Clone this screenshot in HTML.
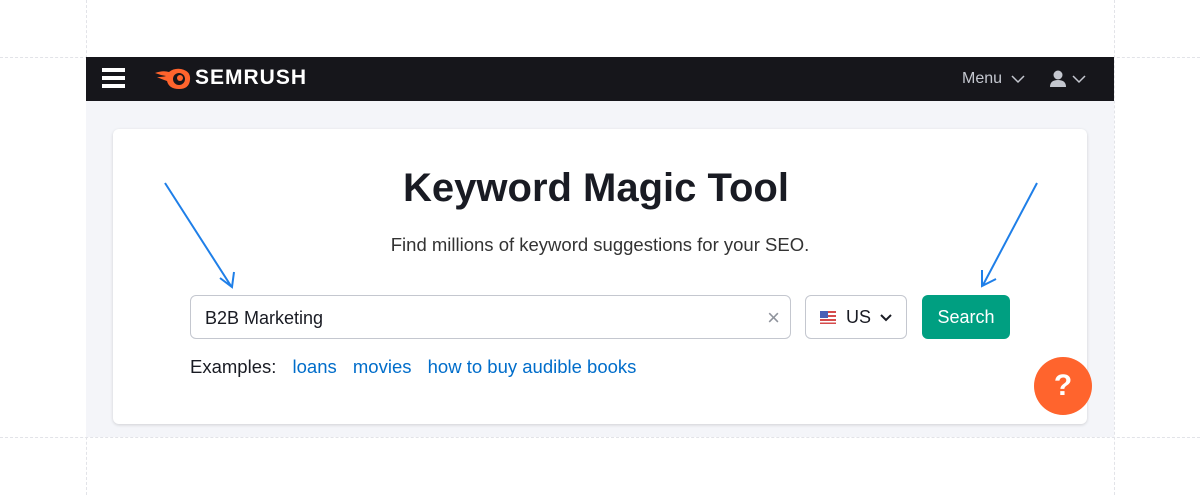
<!DOCTYPE html>
<html><head><style>
*{box-sizing:border-box;margin:0;padding:0}
body{width:1200px;height:495px;background:#fff;position:relative;overflow:hidden;font-family:"Liberation Sans",Arial,sans-serif}
.v{position:absolute;top:0;bottom:0;border-left:1px dashed #e2e3e8}
.h{position:absolute;left:0;right:0;border-top:1px dashed #e2e3e8}
.nav{position:absolute;left:86px;top:57px;width:1028px;height:44px;background:#16161b}
.gray{position:absolute;left:86px;top:101px;width:1028px;height:336px;background:#f4f5f9}
.card{position:absolute;left:113px;top:129px;width:974px;height:295px;background:#fff;border-radius:6px;box-shadow:0 1px 3px rgba(0,0,0,.15)}
.t{position:absolute;left:0;width:1200px;text-align:center;color:#191b23}
.inp{position:absolute;left:190px;top:295px;width:601px;height:44px;border:1px solid #c4c7cf;border-radius:6px;font-size:18px;color:#191b23;padding:12px 14px}
.cty{position:absolute;left:805px;top:295px;width:102px;height:44px;border:1px solid #c4c7cf;border-radius:6px}
.btn{position:absolute;left:922px;top:295px;width:88px;height:44px;background:#009f81;border-radius:6px;color:#fff;font-size:18px;text-align:center;line-height:44px}
.ex{position:absolute;left:190px;top:356px;font-size:18.5px;color:#191b23}
.ex a{color:#006dca;text-decoration:none;margin-left:11px}
.help{position:absolute;left:1034px;top:357px;width:58px;height:58px;border-radius:50%;background:#ff642d;color:#fff;font-size:30px;font-weight:bold;text-align:center;line-height:58px}
</style></head><body>
<div class="v" style="left:86px"></div><div class="v" style="left:1114px"></div>
<div class="h" style="top:57px"></div><div class="h" style="top:437px"></div>
<div class="gray"></div>
<div class="nav">
<div style="position:absolute;left:16px;top:11px;width:23px;height:4px;background:#fff;box-shadow:0 8px 0 #fff,0 16px 0 #fff"></div>
<svg style="position:absolute;left:69px;top:11px" width="36" height="22" viewBox="0 0 36 22"><path d="M0 5 Q8 2 14 4 Q19 0 26 1 Q36 3 35 12 Q34 21 24 21 Q14 21 12 13 Q6 11 2 9 Q8 9 11 8 Q5 7 0 5Z" fill="#ff642d"/><circle cx="24" cy="11" r="6" fill="#16161b"/><circle cx="25" cy="10" r="3" fill="#ff642d"/></svg>
<div style="position:absolute;left:109px;top:9px;color:#fff;font-weight:bold;font-size:21px;letter-spacing:1px">SEMRUSH</div>
<div style="position:absolute;left:876px;top:13px;color:#c4c7cf;font-size:16px">Menu</div>
<svg style="position:absolute;left:925px;top:18px" width="14" height="9"><path d="M1 1l6 6 6-6" stroke="#c4c7cf" stroke-width="1.5" fill="none"/></svg>
<svg style="position:absolute;left:963px;top:13px" width="18" height="18" viewBox="0 0 18 18"><circle cx="9" cy="5" r="4.5" fill="#c4c7cf"/><path d="M1 17q0-7 8-7t8 7z" fill="#c4c7cf"/></svg>
<svg style="position:absolute;left:986px;top:18px" width="14" height="9"><path d="M1 1l6 6 6-6" stroke="#c4c7cf" stroke-width="1.5" fill="none"/></svg>
</div>
<div class="card"></div>
<div class="t" style="top:166px;font-size:40px;font-weight:bold;left:-4px">Keyword Magic Tool</div>
<div class="t" style="top:234px;font-size:18.5px;color:#333">Find millions of keyword suggestions for your SEO.</div>
<div class="inp">B2B Marketing<span style="position:absolute;right:10px;top:9px;color:#8f939c;font-size:22px">×</span></div>
<div class="cty">
<svg style="position:absolute;left:14px;top:15px" width="16" height="13"><rect width="16" height="13" fill="#d54b4b"/><rect y="2" width="16" height="2" fill="#fff"/><rect y="6" width="16" height="2" fill="#fff"/><rect y="10" width="16" height="1.5" fill="#fff"/><rect width="8" height="7" fill="#4a5fb5"/></svg>
<span style="position:absolute;left:40px;top:11px;font-size:18px;color:#191b23">US</span>
<svg style="position:absolute;left:74px;top:18px" width="12" height="8"><path d="M1 1l5 5 5-5" stroke="#191b23" stroke-width="2" fill="none"/></svg>
</div>
<div class="btn">Search</div>
<div class="ex">Examples: <a>loans</a> <a>movies</a> <a>how to buy audible books</a></div>
<div class="help">?</div>
<svg style="position:absolute;left:0;top:0" width="1200" height="495"><g stroke="#1f7fe8" stroke-width="2" fill="none"><path d="M165 183L231 286M220 278L232 287L234 272"/><path d="M1037 183L983 285M982 270L982 286L996 279"/></g></svg>
</body></html>
